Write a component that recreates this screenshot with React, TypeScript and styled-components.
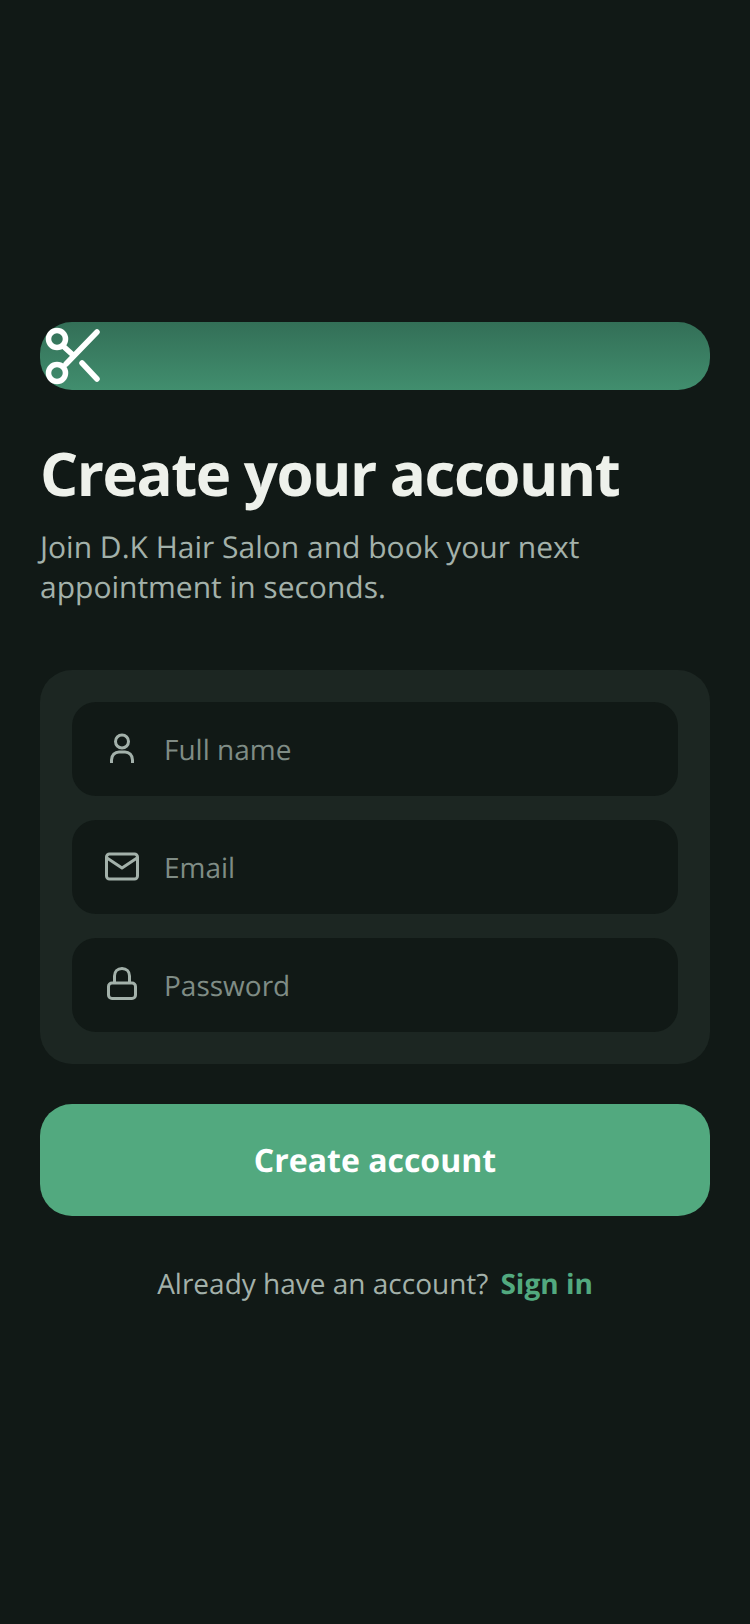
import * as React from 'react'
import styled, { createGlobalStyle } from 'styled-components'

const GlobalStyle = createGlobalStyle`
	html, body {
		margin: 0;
		padding: 0;
		background: #111916;
		text-rendering: geometricPrecision;
	}
`

const ScissorsIcon = (): React.JSX.Element => (
	<svg width="68" height="68" viewBox="0 0 68 68" fill="none" stroke="#ffffff" strokeWidth="5.5" strokeLinecap="round">
		<circle cx="17" cy="17" r="8.5" />
		<circle cx="17" cy="51" r="8.5" />
		<path d="M26 42 L 57 10" />
		<path d="M23 24 L 33 33" />
		<path d="M42 41 L 57 57" />
	</svg>
)

const UserIcon = (): React.JSX.Element => (
	<svg width="40" height="40" viewBox="0 0 40 40" fill="none" stroke="#a3b1aa" strokeWidth="3">
		<circle cx="20" cy="12.5" r="6.5" />
		<path d="M9.5 34 V 31 C 9.5 26 13 23 17 23 H 23 C 27 23 30.5 26 30.5 31 V 34" />
	</svg>
)

const MailIcon = (): React.JSX.Element => (
	<svg width="40" height="40" viewBox="0 0 40 40" fill="none" stroke="#a3b1aa" strokeWidth="3" strokeLinejoin="round">
		<rect x="4.5" y="7" width="31" height="25" rx="3" />
		<path d="M5 11 L 20 21 L 35 11" />
	</svg>
)

const LockIcon = (): React.JSX.Element => (
	<svg width="40" height="40" viewBox="0 0 40 40" fill="none" stroke="#a3b1aa" strokeWidth="3">
		<rect x="6.5" y="18" width="27" height="15.5" rx="3.5" />
		<path d="M12.5 18 V 11 C 12.5 6.5 15.5 3.5 20 3.5 C 24.5 3.5 27.5 6.5 27.5 11 V 18" />
	</svg>
)

const fields = [
	{ label: 'Full name', icon: <UserIcon /> },
	{ label: 'Email', icon: <MailIcon /> },
	{ label: 'Password', icon: <LockIcon /> },
]

export default function App(): React.JSX.Element {
	return (
		<Page>
			<GlobalStyle />
			<Hero>
				<ScissorsIcon />
			</Hero>
			<Title>Create your account</Title>
			<Subtitle>Join D.K Hair Salon and book your next appointment in seconds.</Subtitle>
			<Card>
				{fields.map((field) => (
					<Field key={field.label}>
						<IconSlot>{field.icon}</IconSlot>
						<Placeholder>{field.label}</Placeholder>
					</Field>
				))}
			</Card>
			<SubmitButton>Create account</SubmitButton>
			<Footer>
				<FooterText>Already have an account?</FooterText>
				<SignIn>Sign in</SignIn>
			</Footer>
		</Page>
	)
}

const Page = styled.div`
	box-sizing: border-box;
	width: 750px;
	height: 1624px;
	padding: 0 40px;
	display: flex;
	flex-direction: column;
	justify-content: center;
	background: #111916;
	font-family: 'Open Sans', sans-serif;
`

const Hero = styled.div`
	height: 68px;
	border-radius: 32px;
	background: linear-gradient(180deg, #336f57 0%, #418e6e 100%);
	display: flex;
	align-items: center;
`

const Title = styled.h1`
	margin: 45px 0 0;
	font-size: 60px;
	line-height: 76px;
	font-weight: 700;
	letter-spacing: -1.5px;
	color: #eef1eb;
`

const Subtitle = styled.p`
	margin: 16px 0 0;
	font-size: 30px;
	line-height: 40px;
	font-weight: 400;
	color: #a3b1aa;
`

const Card = styled.div`
	margin-top: 63px;
	padding: 32px;
	border-radius: 32px;
	background: #1c2622;
	display: flex;
	flex-direction: column;
	gap: 24px;
`

const Field = styled.div`
	height: 94px;
	border-radius: 24px;
	background: #111916;
	display: flex;
	align-items: center;
	padding-left: 30px;
	gap: 22px;
`

const IconSlot = styled.div`
	width: 40px;
	height: 40px;
	display: flex;
`

const Placeholder = styled.span`
	padding-top: 2px;
	font-size: 28px;
	color: #7f8c85;
`

const SubmitButton = styled.button`
	margin-top: 40px;
	height: 112px;
	padding: 0;
	border: none;
	border-radius: 32px;
	background: #52a97f;
	color: #ffffff;
	font-family: 'Open Sans', sans-serif;
	font-size: 32px;
	font-weight: 700;
	text-rendering: geometricPrecision;
`

const Footer = styled.div`
	margin-top: 46px;
	height: 40px;
	display: flex;
	justify-content: center;
	gap: 12px;
	font-size: 28px;
	line-height: 44px;
`

const FooterText = styled.span`
	color: #a3b1aa;
`

const SignIn = styled.span`
	color: #52a97f;
	font-weight: 700;
`
